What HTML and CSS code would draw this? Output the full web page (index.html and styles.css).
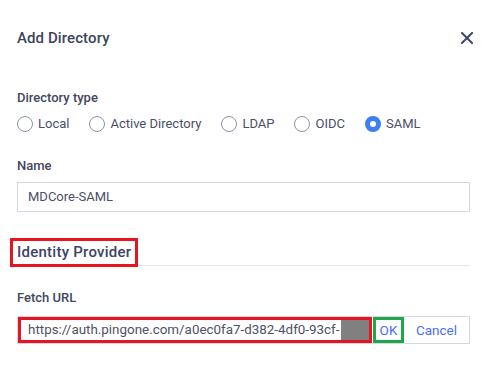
FILE: index.html
```html
<!DOCTYPE html>
<html>
<head>
<meta charset="utf-8">
<link rel="stylesheet" href="styles.css">
</head>
<body>
<div class="dialog">
  <div class="header">
    <h1 class="title">Add Directory</h1>
    <svg class="close" width="12" height="12" viewBox="0 0 12 12"><path d="M1 1L11 11M11 1L1 11" stroke="#3f4766" stroke-width="2" stroke-linecap="square"/></svg>
  </div>

  <div class="label label-type">Directory type</div>
  <div class="radios">
    <label class="radio"><span class="dot"></span>Local</label>
    <label class="radio"><span class="dot"></span>Active Directory</label>
    <label class="radio"><span class="dot"></span>LDAP</label>
    <label class="radio"><span class="dot"></span>OIDC</label>
    <label class="radio"><span class="dot on"></span>SAML</label>
  </div>

  <div class="label label-name">Name</div>
  <div class="input">MDCore-SAML</div>

  <div class="section">
    <span class="section-title">Identity Provider</span>
  </div>

  <div class="label label-fetch">Fetch URL</div>
  <div class="url-group">
    <div class="url-field"><span class="url-text">https://auth.pingone.com/a0ec0fa7-d382-4df0-93cf-</span><span class="redact"></span></div>
    <div class="ok">OK</div>
    <div class="cancel">Cancel</div>
  </div>
</div>
</body>
</html>
```

FILE: styles.css
```css
* { box-sizing: border-box; }
html, body { margin: 0; padding: 0; background: #fff; }
body {
  font-family: Roboto, "Liberation Sans", sans-serif;
  color: #3b4260;
}
.dialog {
  width: 487px;
  padding: 28px 17px 0 17px;
}
.header {
  display: flex;
  justify-content: space-between;
  align-items: center;
  height: 20px;
}
.title {
  margin: 0;
  font-size: 15px;
  font-weight: 500;
  line-height: 20px;
  letter-spacing: 0.1px;
  color: #3d4462;
}
.close { margin-right: -3px; display: block; }
.label {
  font-size: 13px;
  font-weight: 500;
  line-height: 18px;
  color: #41485f;
}
.label-type { margin-top: 41px; }
.radios {
  display: flex;
  gap: 20px;
  margin-top: 8px;
  height: 18px;
  align-items: center;
}
.radio {
  display: flex;
  align-items: center;
  gap: 5px;
  font-size: 13px;
  color: #4a5068;
  line-height: 18px;
}
.dot {
  width: 16px;
  height: 16px;
  border-radius: 50%;
  border: 1px solid #8a92a8;
  display: block;
  background: #fff;
}
.dot.on {
  border: 5px solid #3b7ef6;
  background: #fff;
}
.label-name { margin-top: 24px; }
.input {
  margin-top: 7px;
  height: 30px;
  border: 1px solid #d3d8e6;
  padding: 0 10px;
  font-size: 13px;
  line-height: 28px;
  color: #4a5068;
}
.section {
  margin-top: 26px;
  height: 28px;
  border-bottom: 1px solid #e4e6ee;
}
.section-title {
  display: inline-block;
  margin-left: -7px;
  height: 29px;
  padding: 0 4px;
  border: 3px solid #e8141f;
  background: #fff;
  font-size: 15px;
  font-weight: 500;
  line-height: 23px;
  letter-spacing: 0.25px;
  color: #3d4462;
}
.label-fetch { margin-top: 23px; }
.url-group {
  margin-top: 9px;
  height: 28px;
  border: 1px solid #d3d8e6;
  display: flex;
}
.url-field {
  width: 354px;
  height: 26px;
  border: 3px solid #e8141f;
  display: flex;
  align-items: stretch;
  justify-content: space-between;
  padding-left: 7px;
  font-size: 13.4px;
  line-height: 20px;
  color: #4d5266;
  overflow: hidden;
  white-space: nowrap;
}
.redact {
  width: 28px;
  background: #808080;
  flex: none;
}
.ok {
  width: 31px;
  margin-left: 1px;
  height: 26px;
  border: 3px solid #1fa84a;
  font-size: 13.5px;
  line-height: 20px;
  text-align: center;
  color: #4c6ef5;
}
.cancel {
  flex: 1;
  font-size: 13.5px;
  line-height: 26px;
  text-align: center;
  color: #4c6ef5;
}
```
